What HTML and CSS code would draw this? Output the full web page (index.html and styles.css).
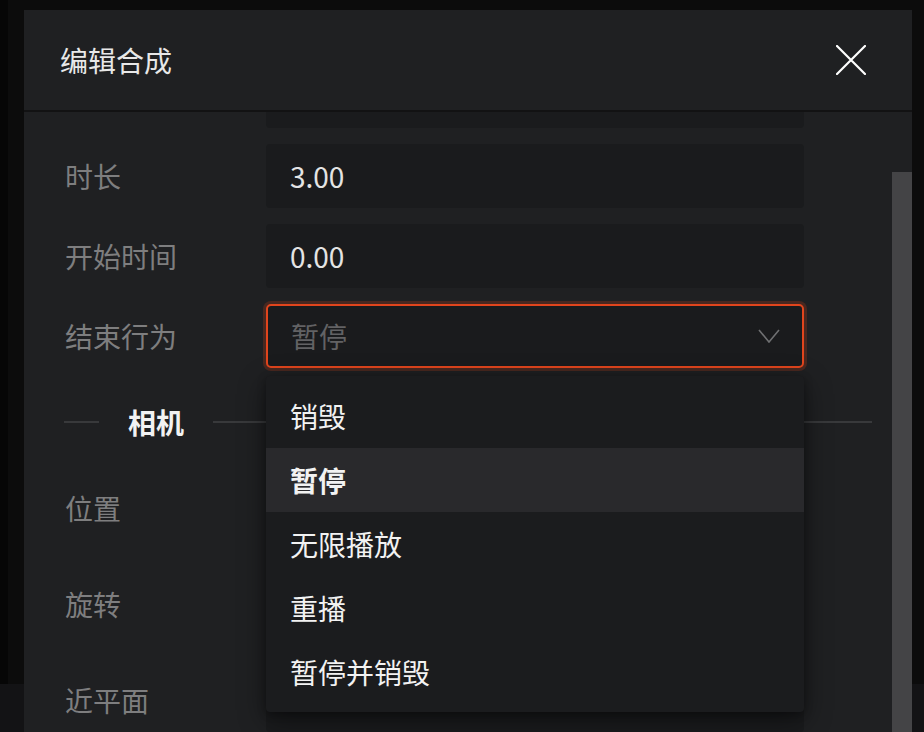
FILE: index.html
```html
<!DOCTYPE html>
<html lang="zh-CN">
<head>
<meta charset="utf-8">
<title>编辑合成</title>
<link rel="stylesheet" href="styles.css">
</head>
<body>
<div class="page">
  <div class="page-main"></div>
  <div class="page-bar"></div>
</div>

<div class="modal">
  <header class="modal-header">
    <h1 class="modal-title">编辑合成</h1>
    <button class="close-btn" aria-label="关闭">
      <svg width="30" height="30" viewBox="0 0 30 30"><path d="M1 1 L29 29 M29 1 L1 29" stroke="#ffffff" stroke-width="2.2" fill="none" stroke-linecap="round"/></svg>
    </button>
  </header>
  <div class="modal-body">
    <div class="scroll-content">
      <div class="form-row">
        <span class="label"></span>
        <div class="input"></div>
      </div>
      <div class="form-row">
        <span class="label">时长</span>
        <div class="input">3.00</div>
      </div>
      <div class="form-row">
        <span class="label">开始时间</span>
        <div class="input">0.00</div>
      </div>
      <div class="form-row">
        <span class="label">结束行为</span>
        <div class="select-wrap">
          <div class="select">
            <span class="select-value">暂停</span>
            <svg class="chevron" width="22" height="14" viewBox="0 0 22 14"><path d="M1 1 L11 13 L21 1" stroke="#6f7072" stroke-width="1.6" fill="none"/></svg>
          </div>
          <ul class="menu">
            <li class="menu-item">销毁</li>
            <li class="menu-item active">暂停</li>
            <li class="menu-item">无限播放</li>
            <li class="menu-item">重播</li>
            <li class="menu-item">暂停并销毁</li>
          </ul>
        </div>
      </div>
      <div class="divider">
        <span class="divider-line short"></span>
        <span class="divider-text">相机</span>
        <span class="divider-line"></span>
      </div>
      <div class="form-row tall">
        <span class="label">位置</span>
        <div class="input"></div>
      </div>
      <div class="form-row tall">
        <span class="label">旋转</span>
        <div class="input"></div>
      </div>
      <div class="form-row tall">
        <span class="label">近平面</span>
        <div class="input"></div>
      </div>
    </div>
    <div class="scrollbar"></div>
  </div>
</div>
</body>
</html>
```

FILE: styles.css
```css
* { box-sizing: border-box; }

html, body {
  margin: 0;
  padding: 0;
  width: 924px;
  height: 732px;
  overflow: hidden;
  background: #0b0b0b;
  font-family: "Noto Sans CJK SC", "Noto Sans", sans-serif;
}

.page {
  display: flex;
  flex-direction: column;
  height: 732px;
}

.page-main {
  flex: 1;
  background: linear-gradient(90deg, #060606 0, #060606 8px, #0c0c0c 8px);
}

.page-bar {
  height: 48px;
  background: #131315;
}

.modal {
  position: absolute;
  left: 24px;
  top: 10px;
  width: 888px;
  height: 740px;
  background: #1f2022;
  display: flex;
  flex-direction: column;
}

.modal-header {
  height: 102px;
  flex: none;
  display: flex;
  align-items: center;
  justify-content: space-between;
  padding: 0 46px 0 36px;
  border-bottom: 2px solid #121213;
  position: relative;
  z-index: 2;
  background: #1f2022;
}

.modal-title {
  margin: 0;
  font-size: 28px;
  font-weight: 400;
  color: #e8e8e8;
  line-height: 1;
}

.close-btn {
  border: 0;
  padding: 0;
  background: none;
  width: 30px;
  height: 30px;
  display: flex;
}

.modal-body {
  flex: 1;
  position: relative;
  overflow: hidden;
}

.scroll-content {
  margin-top: -48px;
  padding: 0 40px;
}

.form-row {
  display: grid;
  grid-template-columns: 202px 538px;
  align-items: center;
  height: 64px;
  margin-bottom: 16px;
}

.form-row.tall {
  height: 96px;
  margin-bottom: 0;
}

.label {
  font-size: 28px;
  color: #7e7e7f;
  line-height: 1;
  padding-left: 1px;
}

.input {
  height: 64px;
  background: #1a1b1d;
  border-radius: 4px;
  display: flex;
  align-items: center;
  padding: 0 24px;
  font-size: 28px;
  color: #e4e4e4;
}

.select-wrap {
  position: relative;
}

.select {
  height: 64px;
  background: #1a1b1d;
  border: 2px solid #e1451d;
  border-radius: 5px;
  box-shadow: 0 0 0 3px rgba(225, 69, 29, 0.22);
  display: flex;
  align-items: center;
  justify-content: space-between;
  padding: 0 22px 0 23px;
}

.select-value {
  font-size: 28px;
  color: #626264;
  line-height: 1;
}

.chevron {
  display: block;
}

.menu {
  position: absolute;
  left: 0;
  right: 0;
  top: calc(100% + 8px);
  margin: 0;
  padding: 8px 0;
  list-style: none;
  background: #1b1c1e;
  border-radius: 4px;
  box-shadow: 0 8px 28px rgba(0, 0, 0, 0.45), 0 2px 8px rgba(0, 0, 0, 0.3);
  z-index: 3;
}

.menu-item {
  height: 64px;
  display: flex;
  align-items: center;
  padding: 0 24px;
  font-size: 28px;
  color: #f2f2f2;
}

.menu-item.active {
  background: #29292c;
  font-weight: 700;
}

.divider {
  height: 76px;
  display: flex;
  align-items: center;
}

.divider-line {
  flex: 1;
  height: 2px;
  background: #38393b;
}

.divider-line.short {
  flex: none;
  width: 35px;
}

.divider-text {
  padding: 0 29px;
  font-size: 28px;
  font-weight: 700;
  color: #f2f2f2;
  line-height: 1;
}

.scrollbar {
  position: absolute;
  right: 0;
  top: 60px;
  bottom: 0;
  width: 20px;
  background: #444446;
}
```
